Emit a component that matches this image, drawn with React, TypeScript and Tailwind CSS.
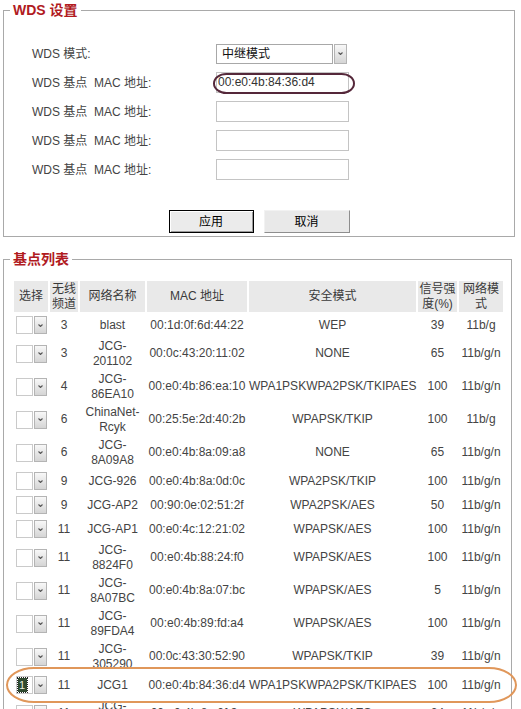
import React from "react";

type Ap = {
  ch: string;
  name: string;
  mac: string;
  sec: string;
  sig: string;
  mode: string;
  tall?: boolean;
  picked?: boolean;
};

const aps: Ap[] = [
  { ch: "3", name: "blast", mac: "00:1d:0f:6d:44:22", sec: "WEP", sig: "39", mode: "11b/g" },
  { ch: "3", name: "JCG-201102", mac: "00:0c:43:20:11:02", sec: "NONE", sig: "65", mode: "11b/g/n", tall: true },
  { ch: "4", name: "JCG-86EA10", mac: "00:e0:4b:86:ea:10", sec: "WPA1PSKWPA2PSK/TKIPAES", sig: "100", mode: "11b/g/n", tall: true },
  { ch: "6", name: "ChinaNet-Rcyk", mac: "00:25:5e:2d:40:2b", sec: "WPAPSK/TKIP", sig: "100", mode: "11b/g", tall: true },
  { ch: "6", name: "JCG-8A09A8", mac: "00:e0:4b:8a:09:a8", sec: "NONE", sig: "65", mode: "11b/g/n", tall: true },
  { ch: "9", name: "JCG-926", mac: "00:e0:4b:8a:0d:0c", sec: "WPA2PSK/TKIP", sig: "100", mode: "11b/g/n" },
  { ch: "9", name: "JCG-AP2", mac: "00:90:0e:02:51:2f", sec: "WPA2PSK/AES", sig: "50", mode: "11b/g/n" },
  { ch: "11", name: "JCG-AP1", mac: "00:e0:4c:12:21:02", sec: "WPAPSK/AES", sig: "100", mode: "11b/g/n" },
  { ch: "11", name: "JCG-8824F0", mac: "00:e0:4b:88:24:f0", sec: "WPAPSK/AES", sig: "100", mode: "11b/g/n", tall: true },
  { ch: "11", name: "JCG-8A07BC", mac: "00:e0:4b:8a:07:bc", sec: "WPAPSK/AES", sig: "5", mode: "11b/g/n", tall: true },
  { ch: "11", name: "JCG-89FDA4", mac: "00:e0:4b:89:fd:a4", sec: "WPAPSK/AES", sig: "100", mode: "11b/g/n", tall: true },
  { ch: "11", name: "JCG-305290", mac: "00:0c:43:30:52:90", sec: "WPAPSK/TKIP", sig: "39", mode: "11b/g/n", tall: true },
  { ch: "11", name: "JCG1", mac: "00:e0:4b:84:36:d4", sec: "WPA1PSKWPA2PSK/TKIPAES", sig: "100", mode: "11b/g/n", picked: true },
  { ch: "11", name: "JCG-8A0F3C", mac: "00:e0:4b:8a:0f:3c", sec: "WPAPSK/AES", sig: "24", mode: "11b/g/n", tall: true },
];

const Chevron = () => (
  <svg width="5" height="3" viewBox="0 0 5 3">
    <path d="M0.5 0.5 L2.5 2.5 L4.5 0.5" fill="none" stroke="#555" strokeWidth="1.1" />
  </svg>
);

const ArrowBtn: React.FC<{ h: string }> = ({ h }) => (
  <div
    className={`w-[13px] ${h} flex items-center justify-center border border-[#b4b4b4] bg-gradient-to-b from-[#f8f8f8] to-[#d5d5d5]`}
  >
    <Chevron />
  </div>
);

const RowSelect: React.FC<{ picked?: boolean }> = ({ picked }) => (
  <div className="flex justify-center gap-[1px]">
    <div className="w-[17px] h-[18px] bg-white border border-[#cacaca] flex items-center pl-[1px]">
      {picked && (
        <div className="w-[9px] h-[14px] bg-[#2f4a2f] outline-1 outline-dotted outline-[#222] text-[#e8f0e0] text-[11px] leading-[14px] text-center">
          1
        </div>
      )}
    </div>
    <ArrowBtn h="h-[18px]" />
  </div>
);

const labels = ["WDS 模式:", "WDS 基点  MAC 地址:", "WDS 基点  MAC 地址:", "WDS 基点  MAC 地址:", "WDS 基点  MAC 地址:"];

export default function App() {
  return (
    <div className="font-['Liberation_Sans',Arial,'Noto_Sans_CJK_SC',sans-serif] text-[12px] text-[#444] bg-white pl-[3px] pb-[20px]">
      {/* WDS settings */}
      <fieldset className="w-[512px] border border-[#a9a9a9] pb-[3px]">
        <legend className="ml-[6px] px-[3px] text-[14px] leading-[20px] font-bold text-[#b11b1f]">WDS 设置</legend>
        <div className="pt-[19px] pl-[28px]">
          {labels.map((l, i) => (
            <div key={i} className="flex items-center h-[29px]">
              <div className="w-[184px] whitespace-pre">{l}</div>
              {i === 0 ? (
                <div className="flex gap-[1px]">
                  <div className="w-[117px] h-[20px] border border-[#a8a8a8] bg-white text-[#111] leading-[18px] pl-[5px]">
                    中继模式
                  </div>
                  <ArrowBtn h="h-[20px]" />
                </div>
              ) : (
                <div className="relative">
                  <div className="w-[133px] h-[21px] border border-[#c4c4c4] bg-white text-[#333] leading-[19px] pl-[1px]">
                    {i === 1 ? "00:e0:4b:84:36:d4" : ""}
                  </div>
                  {i === 1 && (
                    <div className="absolute left-[-3px] right-[-6px] top-[1px] h-[21px] border-2 border-[#55283a] rounded-[14px/11px]" />
                  )}
                </div>
              )}
            </div>
          ))}
        </div>
        <div className="mt-[26px] flex justify-center gap-[10px]">
          <button className="w-[85px] h-[23px] border border-black bg-[#ebebeb] text-black text-[12px] shadow-[inset_1px_1px_0_#fff,inset_-1px_-1px_0_#999]">
            应用
          </button>
          <button className="w-[86px] h-[23px] bg-[#e9e9e9] text-black text-[12px] border border-t-[#f2f2f2] border-l-[#f2f2f2] border-r-[#8e8e8e] border-b-[#8e8e8e]">
            取消
          </button>
        </div>
      </fieldset>

      {/* AP list */}
      <fieldset className="mt-[12px] w-[509px] border border-[#a9a9a9] pb-[10px]">
        <legend className="ml-[6px] px-[3px] text-[14px] leading-[20px] font-bold text-[#b11b1f]">基点列表</legend>
        <div className="relative mt-[10px] ml-[8px] w-[493px]">
          <table className="table-fixed w-[493px] border-separate border-spacing-[2px] leading-[15px] text-center">
            <colgroup>
              <col className="w-[34px]" />
              <col className="w-[28px]" />
              <col className="w-[65px]" />
              <col className="w-[100px]" />
              <col className="w-[167px]" />
              <col className="w-[39px]" />
              <col className="w-[44px]" />
            </colgroup>
            <thead>
              <tr className="h-[31px]">
                {["选择", "无线频道", "网络名称", "MAC 地址", "安全模式", "信号强度(%)", "网络模式"].map((h) => (
                  <th key={h} className="p-0 font-normal bg-[#e9e9e9] text-[#3a3a3a]">
                    {h}
                  </th>
                ))}
              </tr>
            </thead>
            <tbody>
              {aps.map((a, i) => (
                <tr key={i} className={a.tall ? "h-[31px]" : "h-[22px]"}>
                  <td className="p-0">
                    <RowSelect picked={a.picked} />
                  </td>
                  <td className="p-0">{a.ch}</td>
                  <td className="p-0">{a.name}</td>
                  <td className="p-0 whitespace-nowrap">{a.mac}</td>
                  <td className="p-0 whitespace-nowrap">{a.sec}</td>
                  <td className="p-0">{a.sig}</td>
                  <td className="p-0">{a.mode}</td>
                </tr>
              ))}
            </tbody>
          </table>
          {/* highlight around the chosen AP */}
          <div className="absolute left-[-6px] w-[511px] top-[388px] h-[36px] border-[2.5px] border-[#e0975a] rounded-[28px/18px]" />
        </div>
      </fieldset>
    </div>
  );
}
